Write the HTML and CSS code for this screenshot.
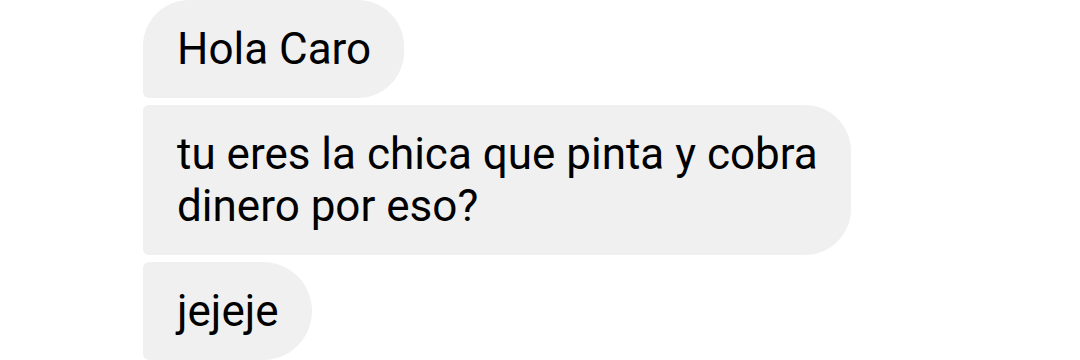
FILE: index.html
```html
<!DOCTYPE html>
<html lang="es">
<head>
    <meta charset="UTF-8">
    <meta name="viewport" content="width=device-width, initial-scale=1.0">
    <title>Chat</title>
    <link rel="stylesheet" href="styles.css">
</head>
<body>
    <div class="chat">
        <div class="bubble first">Hola Caro</div>
        <div class="bubble">tu eres la chica que pinta y cobra<br>dinero por eso?</div>
        <div class="bubble last">jejeje</div>
    </div>
</body>
</html>
```

FILE: styles.css
```css
body {
    margin: 0;
    background: #ffffff;
    font-family: Roboto, "Noto Sans", sans-serif;
    color: #000000;
    overflow: hidden;
}

.chat {
    display: flex;
    flex-direction: column;
    align-items: flex-start;
    gap: 7px;
    padding-left: 143px;
    height: 360px;
}

.bubble {
    box-sizing: border-box;
    max-width: 760px;
    background: #f0f0f0;
    font-size: 44px;
    line-height: 52px;
    padding: 23px 33px 23px 34px;
    border-radius: 6px 46px 46px 6px;
    white-space: nowrap;
}

.bubble.first {
    border-top-left-radius: 46px;
}

.bubble.last {
    border-radius: 6px 49px 49px 6px;
}
```
